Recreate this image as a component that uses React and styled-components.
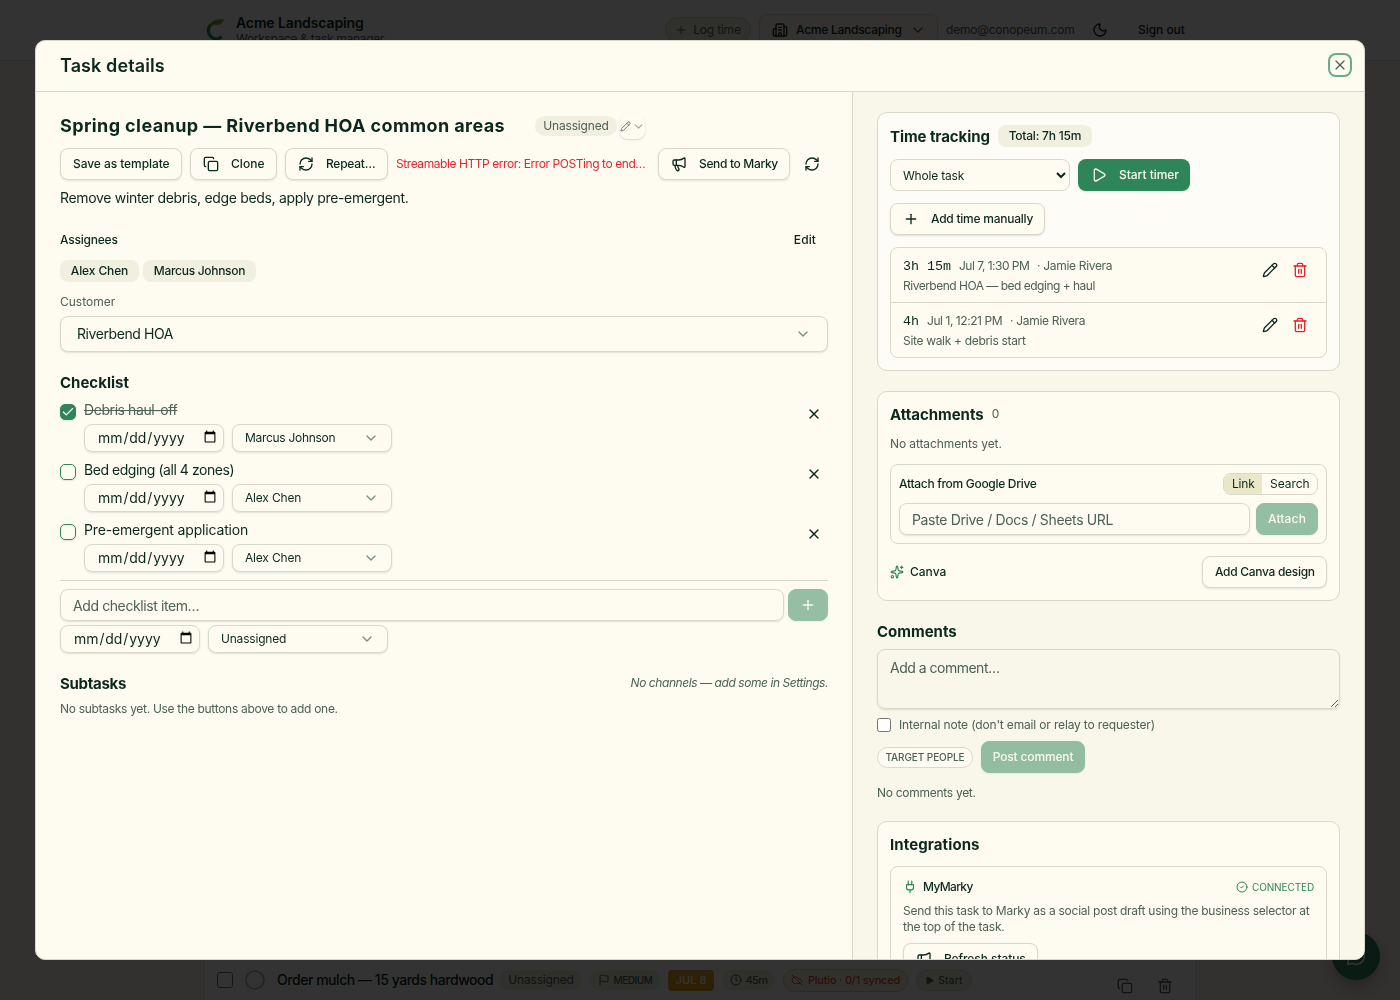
import React from 'react';
import styled, { createGlobalStyle, css } from 'styled-components';
import {
  Building2, Check, ChevronDown, CircleCheck, Clock, Copy, Flag, Megaphone, MessageCircle, Moon,
  Pencil, Play, Plug, Plus, RefreshCw, Sparkles, Trash2, X, CloudOff,
} from 'lucide-react';

const c = {
  ink: '#0b281e',
  soft: '#4d6156',
  line: '#dad9c9',
  cream: '#fefbf1',
  panel: '#f9f6ea',
  chip: '#f1efdf',
  green: '#2e8559',
  red: '#e5242f',
};

const GlobalStyle = createGlobalStyle`
  *, *::before, *::after { box-sizing: border-box; }
  body { margin: 0; background: #fff5ec; overflow: hidden; }
  body, button, input, select, textarea { font-family: Inter, "Liberation Sans", sans-serif; }
  h1, h2, h3, p { margin: 0; }
  svg { flex: none; display: block; }
`;

/* ---------- shared parts ---------- */

const T = styled.span`
  font-size: ${(p) => p.$s || 12}px;
  font-weight: ${(p) => p.$w || 400};
  letter-spacing: ${(p) => p.$ls || 0}px;
  line-height: ${(p) => p.$lh || 16}px;
  color: ${(p) => p.$c || c.ink};
  white-space: nowrap;
  ${(p) => p.$strike && css`text-decoration: line-through;`}
  ${(p) => p.$italic && css`font-style: italic;`}
`;

const Heading = styled.h3`
  padding-top: 1px;
  font-size: 15px;
  font-weight: 650;
  letter-spacing: ${(p) => p.$ls || 0}px;
  line-height: ${(p) => p.$lh || 20}px;
  color: ${c.ink};
`;

const Button = styled.button`
  display: inline-flex;
  align-items: center;
  flex: none;
  gap: 12px;
  height: 32px;
  width: ${(p) => (p.$width ? `${p.$width}px` : 'auto')};
  padding: 0 0 0 12px;
  border: 1px solid ${c.line};
  border-radius: 8px;
  background: ${c.cream};
  color: ${c.ink};
  box-shadow: 0 1px 2px rgba(30, 50, 35, 0.13);
  ${(p) => p.$primary && css`
    border-color: transparent;
    background: ${c.green};
    background-clip: border-box;
    color: ${c.cream};
  `}
  ${(p) => p.$disabled && css`
    opacity: 0.5;
    border-color: ${c.green};
  `}
  ${(p) => p.$center && css`
    padding: 0;
    justify-content: center;
  `}
`;

const IconButton = styled.button`
  display: inline-flex;
  align-items: center;
  justify-content: center;
  width: 28px;
  height: ${(p) => p.$h || 28}px;
  padding: 0;
  border: 0;
  background: none;
  color: ${(p) => p.$c || c.ink};
`;

const Chip = styled.span`
  display: inline-flex;
  align-items: center;
  justify-content: center;
  height: ${(p) => p.$h || 22}px;
  width: ${(p) => p.$width}px;
  gap: ${(p) => p.$gap || 0}px;
  flex: none;
  border-radius: ${(p) => p.$r || 8}px;
  border: ${(p) => (p.$line ? `1px solid ${p.$line}` : '0')};
  background: ${(p) => p.$bg || c.chip};
  color: ${(p) => p.$c || c.soft};
  margin-left: ${(p) => p.$ml || 0}px;
`;

/* ---------- page behind the dialog ---------- */

const Page = styled.div`
  height: 1000px;
  display: flex;
  flex-direction: column;
  background: #fff5ec;
`;

const TopBar = styled.header`
  height: 61px;
  flex: none;
  padding: 0 0 0 204px;
  display: flex;
  align-items: center;
  background: #fff;
  border-bottom: 1px solid ${c.line};
`;

const Brand = styled.div`
  display: flex;
  align-items: center;
  flex: none;
  gap: 8px;
  width: 461px;
`;

const BrandText = styled.div`
  display: flex;
  flex-direction: column;
  padding-top: 2px;
`;

const WorkspaceSelect = styled.div`
  display: flex;
  align-items: center;
  flex: none;
  gap: 8px;
  width: 179px;
  height: 32px;
  margin: 0 8px;
  padding-left: 12px;
  border: 1px solid ${c.line};
  border-radius: 8px;
  background: ${c.cream};
  color: ${c.ink};
`;

const Email = styled(T)`
  width: 146px;
`;

const Account = styled.div`
  display: flex;
  align-items: center;
  color: ${c.ink};
`;

const TaskCard = styled.section`
  width: 992px;
  height: 50px;
  margin: auto auto 0;
  padding: 13px 16px 0 12px;
  display: flex;
  align-items: flex-start;
  background: #fff;
  border: 1px solid ${c.line};
  border-bottom: 0;
  border-radius: 12px 12px 0 0;
`;

const TaskLine = styled.div`
  display: flex;
  align-items: center;
  height: 32px;
  flex: 1;
`;

const Box = styled.span`
  width: 16px;
  height: 16px;
  border: 1px solid #6b6b6b;
  border-radius: 3px;
  margin-right: 12px;
`;

const Ring = styled.span`
  width: 20px;
  height: 20px;
  border: 2px solid #b5b9b0;
  border-radius: 50%;
  margin-right: 12px;
`;

const TaskName = styled(T)`
  width: 215px;
`;

const RowActions = styled.div`
  display: flex;
  gap: 12px;
  padding-top: 8px;
`;

const Fab = styled.div`
  position: fixed;
  right: 20px;
  bottom: 20px;
  width: 48px;
  height: 48px;
  border-radius: 50%;
  display: grid;
  place-items: center;
  background: ${c.green};
  color: #fff;
  box-shadow: 0 8px 16px rgba(0, 0, 0, 0.25);
`;

/* ---------- dialog ---------- */

const Overlay = styled.div`
  position: fixed;
  inset: 0;
  padding: 40px 35px;
  background: rgba(0, 0, 0, 0.8);
`;

const Dialog = styled.div`
  height: 920px;
  display: flex;
  flex-direction: column;
  overflow: hidden;
  background: ${c.cream};
  border: 1px solid ${c.line};
  border-radius: 10px;
`;

const DialogHeader = styled.div`
  height: 51px;
  flex: none;
  display: flex;
  align-items: center;
  justify-content: space-between;
  padding: 0 14px 2px 24px;
  border-bottom: 1px solid ${c.line};
`;

const DialogTitle = styled(T)`
  padding-top: 2px;
`;

const CloseButton = styled.button`
  width: 20px;
  height: 20px;
  padding: 0;
  display: grid;
  place-items: center;
  border: 0;
  border-radius: 6px;
  background: ${c.cream};
  color: ${c.soft};
  box-shadow: 0 0 0 2px #69ab8a;
`;

const Columns = styled.div`
  display: flex;
  flex: 1;
  min-height: 0;
`;

const Main = styled.div`
  width: 816px;
  flex: none;
  padding: 20px 24px;
`;

const Side = styled.aside`
  flex: 1;
  padding: 20px 24px;
  overflow: hidden;
  background: ${c.panel};
  border-left: 1px solid ${c.line};
`;

const TitleRow = styled.div`
  display: flex;
  align-items: center;
  height: 28px;
`;

const TaskTitle = styled(T)`
  width: 445px;
`;

const AssignPicker = styled.button`
  width: 25px;
  height: 25px;
  margin-left: 3px;
  padding: 0;
  display: flex;
  align-items: center;
  justify-content: center;
  gap: 1px;
  border: 0;
  border-radius: 8px;
  background: ${c.cream};
  color: ${c.soft};
  box-shadow: 0 1px 2px rgba(30, 50, 35, 0.16);
`;

const Toolbar = styled.div`
  display: flex;
  align-items: center;
  gap: 8px;
  margin-top: 8px;
`;

const ErrorText = styled(T)`
  width: 254px;
  color: ${c.red};
`;

const Description = styled.p`
  display: flex;
  margin-top: 8px;
  height: 20px;
`;

const Between = styled.div`
  display: flex;
  align-items: center;
  justify-content: space-between;
  height: ${(p) => p.$h}px;
  margin-top: ${(p) => p.$mt || 0}px;
  padding-right: ${(p) => p.$pr || 0}px;
`;

const Row = styled.div`
  display: flex;
  align-items: center;
  gap: ${(p) => p.$gap || 0}px;
  height: ${(p) => (p.$h ? `${p.$h}px` : 'auto')};
  margin-top: ${(p) => p.$mt || 0}px;
`;

const Field = styled.div`
  display: flex;
  flex-direction: column;
  gap: 6px;
  margin-top: 12px;
`;

const Picker = styled.div`
  display: flex;
  align-items: center;
  justify-content: space-between;
  width: ${(p) => (p.$width ? `${p.$width}px` : '100%')};
  height: ${(p) => p.$h || 28}px;
  padding: 0 ${(p) => p.$px || 12}px;
  border: 1px solid ${c.line};
  border-radius: 8px;
  background: ${c.cream};
  color: #7c8c83;
  box-shadow: 0 1px 2px rgba(30, 50, 35, 0.13);
`;

const inputBase = css`
  border: 1px solid ${c.line};
  border-radius: 8px;
  background: transparent;
  color: ${c.ink};
  font-size: 14px;
  box-shadow: 0 1px 2px rgba(30, 50, 35, 0.13);
  outline: none;
  &::placeholder { color: ${c.soft}; opacity: 1; }
`;

const DateInput = styled.input.attrs({ type: 'date' })`
  ${inputBase}
  width: 140px;
  height: 28px;
  padding: 0 4px 2px 12px;
  letter-spacing: -0.08px;
`;

const TextInput = styled.input`
  ${inputBase}
  flex: 1;
  min-width: 0;
  height: 32px;
  padding: 0 12px;
  letter-spacing: ${(p) => p.$ls}px;
`;

const Items = styled.div`
  display: flex;
  flex-direction: column;
  gap: 9px;
  margin-top: 8px;
`;

const Item = styled.div`
  display: grid;
  grid-template-columns: 16px 1fr 28px;
  column-gap: 8px;
  height: 51px;
  align-items: start;
`;

const ItemBody = styled.div`
  display: flex;
  flex-direction: column;
  gap: 5px;
`;

const CheckMark = styled.span`
  width: 16px;
  height: 16px;
  margin-top: 3px;
  display: grid;
  place-items: center;
  border: 1px solid ${c.green};
  border-radius: 5px;
  color: #fff;
  background: ${(p) => (p.$on ? c.green : 'transparent')};
  box-shadow: 0 1px 2px rgba(30, 50, 35, 0.13);
`;

const AddItem = styled.div`
  margin-top: 8px;
  padding-top: 8px;
  border-top: 1px solid ${c.line};
`;

const Card = styled.section`
  margin-top: ${(p) => p.$mt || 0}px;
  padding: 12px;
  border: 1px solid ${c.line};
  border-radius: 10px;
  background: ${(p) => p.$bg || c.cream};
`;

const NativeSelect = styled.select`
  width: 180px;
  height: 32px;
  padding: 0 0 0 8px;
  border: 1px solid ${c.line};
  border-radius: 8px;
  background: ${c.cream};
  color: ${c.ink};
  font-size: 12px;
  letter-spacing: -0.2px;
`;

const Entries = styled.div`
  margin-top: 12px;
  border: 1px solid ${c.line};
  border-radius: 8px;
  background: ${c.cream};
`;

const Entry = styled.div`
  display: flex;
  justify-content: space-between;
  height: 54px;
  padding: 8px 12px;
  & + & { height: 55px; border-top: 1px solid ${c.line}; }
`;

const EntryText = styled.div`
  display: flex;
  flex-direction: column;
  gap: 2px;
`;

const Duration = styled.span`
  padding-top: 1px;
  font: 13.33px/20px "Liberation Mono", monospace;
  color: ${c.ink};
`;

const Inset = styled.div`
  margin-top: 12px;
  padding: ${(p) => p.$p}px;
  border: 1px solid ${c.line};
  border-radius: 8px;
`;

const Toggle = styled.div`
  display: flex;
  width: 95px;
  height: 22px;
  overflow: hidden;
  border: 1px solid ${c.line};
  border-radius: 8px;
`;

const ToggleOption = styled.span`
  display: flex;
  align-items: center;
  padding-left: 8px;
  width: ${(p) => p.$width}px;
  background: ${(p) => (p.$on ? '#eae6c8' : 'transparent')};
`;

const CommentBox = styled.textarea`
  ${inputBase}
  display: block;
  width: 100%;
  height: 60px;
  margin-top: 8px;
  padding: 8px 12px;
  line-height: 20px;
  letter-spacing: -0.5px;
`;

const NativeCheck = styled.input.attrs({ type: 'checkbox' })`
  width: 14px;
  height: 14px;
  margin: 0;
`;

const Paragraph = styled.p`
  margin: 8px 0;
  font-size: 12px;
  line-height: 16px;
  letter-spacing: -0.26px;
  color: ${c.soft};
`;

const Logo = () => (
  <svg width="24" height="24" viewBox="0 0 24 24" fill="none">
    <path d="M17.500 18.500c-2 2.500-6 3.500-9 1.500C3.500 17 3 10 7 6.500" stroke="#2e8559" strokeWidth="3" />
    <path d="M5 8C8 2 13 .8 20.500 1.500c-1 2-2.500 4.500-5 5-3 .6-5-.5-8.500 2z" fill="#8cae3c" />
    <path d="M6 8c3-3 7-4.500 11-4.500" stroke="#2e8559" strokeWidth="1" />
  </svg>
);

const checklist = [
  { text: 'Debris haul-off', ls: -0.42, done: true, who: 'Marcus Johnson', wls: -0.3 },
  { text: 'Bed edging (all 4 zones)', ls: -0.45, who: 'Alex Chen', wls: -0.18 },
  { text: 'Pre-emergent application', ls: -0.17, who: 'Alex Chen', wls: -0.18 },
];

const entries = [
  { time: '3h 15m', at: 'Jul 7, 1:30 PM', als: -0.52, w: 70, note: 'Riverbend HOA — bed edging + haul', nls: -0.5 },
  { time: '4h', at: 'Jul 1, 12:21 PM', als: -0.44, w: 75, note: 'Site walk + debris start', nls: -0.32 },
];

const When = styled(T)`
  width: ${(p) => p.$width}px;
`;

function Background() {
  return (
    <Page>
      <TopBar>
        <Brand>
          <Logo />
          <BrandText>
            <T $s={14} $w={580} $ls={-0.12}>Acme Landscaping</T>
            <T $ls={-0.31} $c={c.soft}>Workspace &amp; task manager</T>
          </BrandText>
        </Brand>
        <Chip $width={86} $h={26} $r={13} $gap={6} $line={c.line}>
          <Plus size={12} />
          <T $ls={-0.2} $c={c.soft}>Log time</T>
        </Chip>
        <WorkspaceSelect>
          <Building2 size={16} />
          <T $w={480} $ls={-0.26}>Acme Landscaping</T>
          <ChevronDown size={16} color={c.soft} />
        </WorkspaceSelect>
        <Account>
          <Email $ls={-0.2} $c={c.soft}>demo@conopeum.com</Email>
          <Row $gap={30}>
            <Moon size={16} />
            <T $w={480} $ls={-0.05}>Sign out</T>
          </Row>
        </Account>
      </TopBar>
      <TaskCard>
        <TaskLine>
          <Box />
          <Ring />
          <TaskName $s={14} $w={460} $ls={-0.46} $lh={20}>Order mulch — 15 yards hardwood</TaskName>
          <Chip $width={82} $h={20} $r={10} $ml={8}><T $ls={-0.15} $c={c.soft}>Unassigned</T></Chip>
          <Chip $width={70} $h={20} $r={10} $ml={8} $gap={4}>
            <Flag size={12} /><T $s={10} $w={500} $ls={-0.44} $c={c.soft}>MEDIUM</T>
          </Chip>
          <Chip $width={46} $h={21} $r={4} $ml={8} $bg="#e0a020"><T $s={11} $w={500} $ls={0.1} $c="#fff">JUL 8</T></Chip>
          <Chip $width={53} $h={20} $r={10} $ml={8} $gap={4}>
            <Clock size={12} /><T $s={11} $w={450} $ls={-0.6} $c={c.soft}>45m</T>
          </Chip>
          <Chip $width={125} $h={23} $r={12} $ml={8} $gap={5} $line="#f3c9a0" $bg="#fdf3e2" $c="#d9480f">
            <CloudOff size={12} /><T $s={11} $w={450} $ls={-0.2} $c="#d9480f">Plutio · 0/1 synced</T>
          </Chip>
          <Chip $width={56} $h={21} $r={11} $ml={8} $gap={4} $line={c.line}>
            <Play size={9} fill="currentColor" /><T $s={10} $w={450} $ls={0.3} $c={c.soft}>Start</T>
          </Chip>
        </TaskLine>
        <RowActions>
          <IconButton $c={c.soft}><Copy size={16} /></IconButton>
          <IconButton $c={c.soft}><Trash2 size={16} /></IconButton>
        </RowActions>
      </TaskCard>
      <Fab><MessageCircle size={20} /></Fab>
    </Page>
  );
}

function TaskMain() {
  return (
    <Main>
      <TitleRow>
        <TaskTitle as="h2" $s={18} $w={650} $ls={0.4} $lh={28}>Spring cleanup — Riverbend HOA common areas</TaskTitle>
        <Chip $width={82} $h={20} $r={10} $ml={30}><T $ls={-0.15} $c={c.soft}>Unassigned</T></Chip>
        <AssignPicker><Pencil size={11} strokeWidth={1.8} /><ChevronDown size={13} color="#9aa69f" /></AssignPicker>
      </TitleRow>
      <Toolbar>
        <Button $width={122}><T $w={460} $ls={-0.07}>Save as template</T></Button>
        <Button $width={87}><Copy size={16} /><T $w={460} $ls={0.03}>Clone</T></Button>
        <Button $width={103}><RefreshCw size={16} /><T $w={460} $ls={-0.25}>Repeat…</T></Button>
        <ErrorText $ls={-0.43}>Streamable HTTP error: Error POSTing to end…</ErrorText>
        <Button $width={132}><Megaphone size={16} /><T $w={460} $ls={-0.34}>Send to Marky</T></Button>
        <IconButton><RefreshCw size={16} /></IconButton>
      </Toolbar>
      <Description>
        <T $s={14} $ls={-0.325} $lh={20}>Remove winter debris, edge beds, apply pre-emergent.</T>
      </Description>

      <Between $h={32} $mt={16} $pr={12}>
        <T $w={460} $ls={-0.22}>Assignees</T>
        <T $w={460} $ls={0.1}>Edit</T>
      </Between>
      <Row $gap={4} $mt={4}>
        <Chip $width={79}><T $w={540} $ls={-0.13}>Alex Chen</T></Chip>
        <Chip $width={113}><T $w={540} $ls={-0.3}>Marcus Johnson</T></Chip>
      </Row>
      <Field>
        <T $c={c.soft}>Customer</T>
        <Picker $h={36} $px={16}>
          <T $s={14} $ls={-0.42} $lh={20}>Riverbend HOA</T>
          <ChevronDown size={16} />
        </Picker>
      </Field>

      <Row $h={22} $mt={19}><Heading $ls={0}>Checklist</Heading></Row>
      <Items>
        {checklist.map((it) => (
          <Item key={it.text}>
            <CheckMark $on={it.done}>{it.done && <Check size={14} />}</CheckMark>
            <ItemBody>
              <T $s={14} $ls={it.ls} $lh={18} $strike={it.done} $c={it.done ? c.soft : c.ink}>
                {it.text}
              </T>
              <Row $gap={8}>
                <DateInput />
                <Picker $width={160}>
                  <T $ls={it.wls}>{it.who}</T>
                  <ChevronDown size={16} />
                </Picker>
              </Row>
            </ItemBody>
            <IconButton $h={26}><X size={16} /></IconButton>
          </Item>
        ))}
      </Items>
      <AddItem>
        <Row $gap={4}>
          <TextInput placeholder="Add checklist item…" $ls={-0.4} />
          <Button $primary $disabled $center $width={40}><Plus size={16} /></Button>
        </Row>
        <Row $gap={8} $mt={4}>
          <DateInput />
          <Picker $width={180}>
            <T $ls={-0.2}>Unassigned</T>
            <ChevronDown size={16} />
          </Picker>
        </Row>
      </AddItem>

      <Between $h={22} $mt={19}>
        <Heading $ls={-0.3}>Subtasks</Heading>
        <T $italic $ls={-0.43} $c={c.soft}>No channels — add some in Settings.</T>
      </Between>
      <Row $h={16} $mt={7}>
        <T $ls={-0.3} $c={c.soft}>No subtasks yet. Use the buttons above to add one.</T>
      </Row>
    </Main>
  );
}

function TaskSide() {
  return (
    <Side>
      <Card $bg="#fdfcf6">
        <Row $h={22} $gap={8}>
          <Heading $ls={-0.07}>Time tracking</Heading>
          <Chip $width={94}><T $w={460} $ls={-0.22}>Total: 7h 15m</T></Chip>
        </Row>
        <Row $gap={8} $mt={12}>
          <NativeSelect><option>Whole task</option></NativeSelect>
          <Button $primary $width={112}><Play size={16} /><T $w={460} $ls={-0.03} $c={c.cream}>Start timer</T></Button>
        </Row>
        <Row $mt={12}>
          <Button $width={155}><Plus size={16} /><T $w={460} $ls={-0.24}>Add time manually</T></Button>
        </Row>
        <Entries>
          {entries.map((e) => (
            <Entry key={e.time}>
              <EntryText>
                <Row $gap={8} $h={20}>
                  <Duration>{e.time}</Duration>
                  <When $width={e.w} $ls={e.als} $c={c.soft}>{e.at}</When>
                  <T $ls={-0.31} $c={c.soft}>· Jamie Rivera</T>
                </Row>
                <T $ls={e.nls} $c={c.soft}>{e.note}</T>
              </EntryText>
              <Row $gap={2} $h={28}>
                <IconButton><Pencil size={16} /></IconButton>
                <IconButton $c={c.red}><Trash2 size={16} /></IconButton>
              </Row>
            </Entry>
          ))}
        </Entries>
      </Card>

      <Card $mt={20}>
        <Row $h={20} $gap={8}>
          <Heading $ls={-0.03}>Attachments</Heading>
          <T $c={c.soft}>0</T>
        </Row>
        <Row $h={16} $mt={12}><T $ls={-0.1} $c={c.soft}>No attachments yet.</T></Row>
        <Inset $p={8}>
          <Between $h={22}>
            <T $w={460} $ls={-0.3}>Attach from Google Drive</T>
            <Toggle>
              <ToggleOption $on $width={38}><T $ls={-0.2}>Link</T></ToggleOption>
              <ToggleOption $width={55}><T $ls={-0.05}>Search</T></ToggleOption>
            </Toggle>
          </Between>
          <Row $gap={6} $mt={8}>
            <TextInput placeholder="Paste Drive / Docs / Sheets URL" $ls={-0.35} />
            <Button $primary $disabled $center $width={62}><T $w={460} $ls={0.15} $c={c.cream}>Attach</T></Button>
          </Row>
        </Inset>
        <Between $h={32} $mt={12}>
          <Row $gap={6}>
            <Sparkles size={14} color={c.green} />
            <T $w={460}>Canva</T>
          </Row>
          <Button $width={125}><T $w={460} $ls={-0.3}>Add Canva design</T></Button>
        </Between>
      </Card>

      <Row $h={20} $mt={20}><Heading $ls={0}>Comments</Heading></Row>
      <CommentBox placeholder="Add a comment…" />
      <Row $h={16} $gap={8} $mt={8}>
        <NativeCheck />
        <T $ls={-0.16} $c={c.soft}>Internal note (don't email or relay to requester)</T>
      </Row>
      <Row $gap={8} $mt={8}>
        <Chip $width={96} $h={21} $r={11} $line={c.line} $bg={c.cream}>
          <T $s={10} $w={450} $ls={-0.09} $c={c.soft}>TARGET PEOPLE</T>
        </Chip>
        <Button $primary $disabled $center $width={104}><T $w={460} $ls={-0.15} $c={c.cream}>Post comment</T></Button>
      </Row>
      <Row $h={16} $mt={12}><T $ls={-0.28} $c={c.soft}>No comments yet.</T></Row>

      <Card $mt={20}>
        <Row $h={20}><Heading $ls={0.1}>Integrations</Heading></Row>
        <Inset $p={12}>
          <Between $h={16}>
            <Row $gap={6}>
              <Plug size={14} color={c.green} />
              <T $w={460} $ls={-0.65}>MyMarky</T>
            </Row>
            <Row $gap={4}>
              <CircleCheck size={12} color={c.green} />
              <T $s={10} $ls={-0.11} $c={c.green}>CONNECTED</T>
            </Row>
          </Between>
          <Paragraph>
            Send this task to Marky as a social post draft using the business selector at the top of the task.
          </Paragraph>
          <Button $width={135}><Megaphone size={16} /><T $w={460} $ls={-0.07}>Refresh status</T></Button>
        </Inset>
      </Card>
    </Side>
  );
}

export default function App() {
  return (
    <>
      <GlobalStyle />
      <Background />
      <Overlay>
        <Dialog role="dialog">
          <DialogHeader>
            <DialogTitle as="h1" $s={18} $w={640} $ls={0.1} $lh={24}>Task details</DialogTitle>
            <CloseButton><X size={16} strokeWidth={1.8} /></CloseButton>
          </DialogHeader>
          <Columns>
            <TaskMain />
            <TaskSide />
          </Columns>
        </Dialog>
      </Overlay>
    </>
  );
}
